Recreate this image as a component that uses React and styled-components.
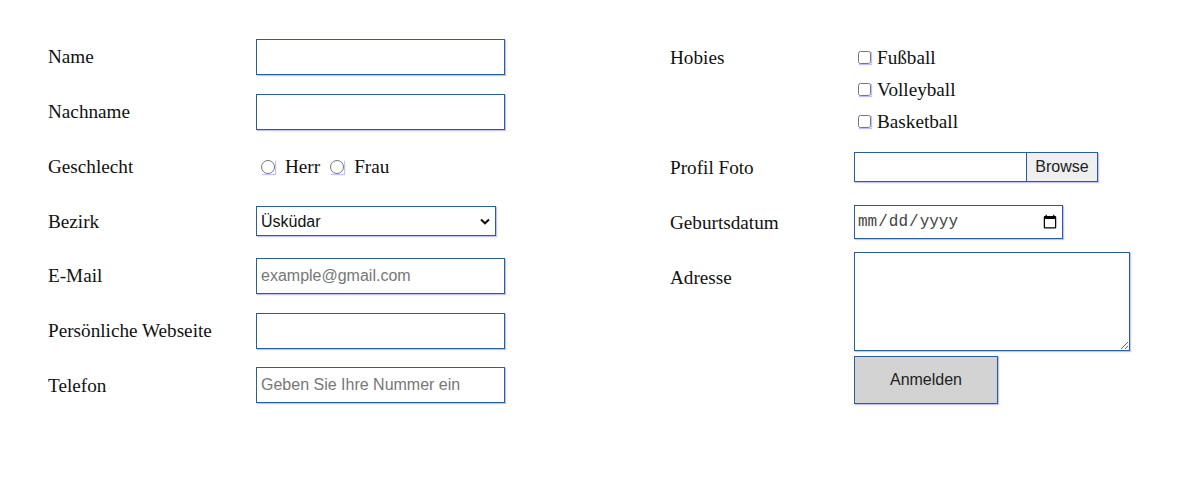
import React from "react";
import styled, { createGlobalStyle } from "styled-components";

const GlobalStyle = createGlobalStyle`
  body {
    margin: 0;
    background: #ffffff;
    font-family: "Liberation Serif", "Times New Roman", serif;
    color: #111;
  }
`;

const fieldBorder = "#285e99";
const fieldShadow = "1px 1px 1px #c0c2fa";

const Form = styled.form`
  display: flex;
  padding: 29.6px 0 0 48px;
`;

const Column = styled.div`
  display: grid;
  grid-template-columns: ${(p) => p.labelWidth}px auto;
  grid-template-rows: ${(p) => p.rows};
  align-items: center;
  width: ${(p) => p.width}px;
`;

const Label = styled.label`
  font-size: 19.2px;
  align-self: ${(p) => (p.top ? "start" : "center")};
  min-height: ${(p) => (p.top ? "55px" : "0")};
  padding-top: 1px;
  display: flex;
  align-items: center;
`;

const TextInput = styled.input`
  box-sizing: border-box;
  width: 249px;
  height: 36px;
  border: 1px solid ${fieldBorder};
  box-shadow: ${fieldShadow};
  padding: 0 4px;
  font-family: "Liberation Sans", Arial, sans-serif;
  font-size: 16px;
  outline: none;
  &::placeholder {
    color: #777;
  }
`;

const SelectWrap = styled.div`
  position: relative;
  width: 240px;
  height: 30px;
`;

const Select = styled.select`
  box-sizing: border-box;
  width: 240px;
  height: 30px;
  appearance: none;
  border: 1px solid ${fieldBorder};
  border-radius: 0;
  box-shadow: ${fieldShadow};
  background: #fff;
  font-family: "Liberation Sans", Arial, sans-serif;
  font-size: 16px;
  color: #111;
  padding: 0 4px;
`;

const Chevron = styled.svg`
  position: absolute;
  right: 6px;
  top: 12px;
  pointer-events: none;
`;

const ChoiceRow = styled.div`
  display: flex;
  align-items: center;
  font-size: 19.2px;
  padding-top: 2px;
`;

const Radio = styled.input.attrs({ type: "radio" })`
  width: 14px;
  height: 14px;
  margin: 0 10px 0 5px;
  box-shadow: ${fieldShadow};
`;

const ChoiceText = styled.span`
  margin-right: 5px;
`;

const Hobbies = styled.div`
  display: flex;
  flex-direction: column;
  align-self: start;
  padding-top: 12px;
`;

const CheckLine = styled.label`
  display: flex;
  align-items: center;
  height: 32px;
  font-size: 19.2px;
`;

const Checkbox = styled.input.attrs({ type: "checkbox" })`
  width: 13px;
  height: 13px;
  margin: 0 6px 0 4px;
  box-shadow: ${fieldShadow};
`;

const FileBox = styled.div`
  box-sizing: border-box;
  display: flex;
  width: 244px;
  height: 30px;
  border: 1px solid ${fieldBorder};
  box-shadow: ${fieldShadow};
`;

const FileName = styled.div`
  flex: 1;
`;

const BrowseButton = styled.span`
  display: flex;
  align-items: center;
  justify-content: center;
  width: 70px;
  background: #efefef;
  border-left: 1px solid ${fieldBorder};
  font-family: "Liberation Sans", Arial, sans-serif;
  font-size: 16px;
  color: #222;
`;

const DateInput = styled.input.attrs({ type: "date" })`
  box-sizing: border-box;
  width: 209px;
  height: 34px;
  border: 1px solid ${fieldBorder};
  box-shadow: ${fieldShadow};
  font-family: "Liberation Mono", "Courier New", monospace;
  font-size: 16px;
  padding: 0 2px;
  color: #444;
`;

const AddressCell = styled.div`
  display: flex;
  flex-direction: column;
  align-items: flex-start;
  align-self: start;
  padding-top: 2px;
`;

const TextArea = styled.textarea`
  box-sizing: border-box;
  width: 276px;
  height: 99px;
  border: 1px solid ${fieldBorder};
  box-shadow: ${fieldShadow};
  margin: 0;
`;

const Submit = styled.button`
  box-sizing: border-box;
  width: 144px;
  height: 48px;
  margin-top: 5px;
  background: #d3d3d3;
  border: 1px solid ${fieldBorder};
  box-shadow: ${fieldShadow};
  font-family: "Liberation Sans", Arial, sans-serif;
  font-size: 16px;
  color: #222;
`;

export default function App() {
  return (
    <>
      <GlobalStyle />
      <Form onSubmit={(e) => e.preventDefault()}>
        <Column labelWidth={208} width={622} rows="repeat(7, 54.75px)">
          <Label>Name</Label>
          <TextInput />
          <Label>Nachname</Label>
          <TextInput />
          <Label>Geschlecht</Label>
          <ChoiceRow>
            <Radio name="g" />
            <ChoiceText>Herr</ChoiceText>
            <Radio name="g" />
            <ChoiceText>Frau</ChoiceText>
          </ChoiceRow>
          <Label>Bezirk</Label>
          <SelectWrap>
            <Select defaultValue="Üsküdar">
              <option>Üsküdar</option>
              <option>Kadıköy</option>
              <option>Beşiktaş</option>
            </Select>
            <Chevron width="10" height="7" viewBox="0 0 10 7">
              <path d="M1 1.5 L5 5.3 L9 1.5" fill="none" stroke="#111" strokeWidth="2" />
            </Chevron>
          </SelectWrap>
          <Label>E-Mail</Label>
          <TextInput placeholder="example@gmail.com" />
          <Label>Persönliche Webseite</Label>
          <TextInput />
          <Label>Telefon</Label>
          <TextInput placeholder="Geben Sie Ihre Nummer ein" />
        </Column>
        <Column labelWidth={184} width={500} rows="110px 55px 55px auto">
          <Label top>Hobies</Label>
          <Hobbies>
            <CheckLine>
              <Checkbox />
              Fußball
            </CheckLine>
            <CheckLine>
              <Checkbox />
              Volleyball
            </CheckLine>
            <CheckLine>
              <Checkbox />
              Basketball
            </CheckLine>
          </Hobbies>
          <Label>Profil Foto</Label>
          <FileBox>
            <FileName />
            <BrowseButton>Browse</BrowseButton>
          </FileBox>
          <Label>Geburtsdatum</Label>
          <DateInput />
          <Label top>Adresse</Label>
          <AddressCell>
            <TextArea />
            <Submit type="submit">Anmelden</Submit>
          </AddressCell>
        </Column>
      </Form>
    </>
  );
}
